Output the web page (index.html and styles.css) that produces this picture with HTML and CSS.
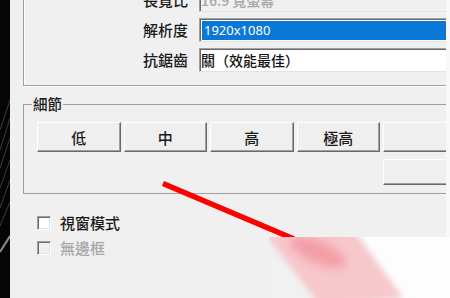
FILE: index.html
```html
<!DOCTYPE html>
<html lang="zh-Hant">
<head>
    <meta charset="UTF-8">
    <title>顯示設定</title>
    <link rel="stylesheet" href="styles.css">
</head>
<body>
<div class="screen">
    <div class="strip">
        <svg width="10" height="298" viewBox="0 0 10 298">
            <g stroke="#4a4a4a" stroke-width="1" opacity="0.8">
                <line x1="0" y1="130" x2="10" y2="100"/>
                <line x1="0" y1="150" x2="10" y2="118"/>
                <line x1="0" y1="168" x2="10" y2="138"/>
                <line x1="0" y1="188" x2="10" y2="160"/>
                <line x1="0" y1="208" x2="10" y2="180"/>
                <line x1="0" y1="226" x2="10" y2="202"/>
            </g>
            <line x1="0" y1="252" x2="10" y2="236" stroke="#8a8a8a" stroke-width="2"/>
        </svg>
    </div>

    <div class="panel">
        <!-- 顯示 -->
        <div class="settings">
            <span class="label">長寬比</span>
            <div class="field disabled">16:9 寬螢幕</div>

            <span class="label">解析度</span>
            <div class="field"><span class="selected">1920x1080</span></div>

            <span class="label">抗鋸齒</span>
            <div class="field">關（效能最佳）</div>
        </div>

        <!-- 細節 -->
        <fieldset class="detail">
            <legend>細節</legend>
            <div class="presets">
                <button class="btn">低</button>
                <button class="btn">中</button>
                <button class="btn">高</button>
                <button class="btn">極高</button>
                <button class="btn"></button>
            </div>
            <div class="extra">
                <button class="btn wide"></button>
            </div>
        </fieldset>

        <div class="options">
            <label class="check"><span class="box"></span>視窗模式</label>
            <label class="check off"><span class="box"></span>無邊框</label>
        </div>
    </div>

    <div class="edge"></div>

    <!-- 標註箭頭 -->
    <svg class="marker" width="450" height="298" viewBox="0 0 450 298">
        <defs>
            <filter id="soft" x="-50%" y="-50%" width="200%" height="200%">
                <feGaussianBlur stdDeviation="5"/>
            </filter>
            <filter id="softer" x="-50%" y="-50%" width="200%" height="200%">
                <feGaussianBlur stdDeviation="3"/>
            </filter>
            <clipPath id="patch">
                <rect x="269" y="237" width="181" height="61"/>
            </clipPath>
        </defs>
        <line x1="163" y1="183.5" x2="294" y2="239" stroke="#ff0000" stroke-width="5.5"/>
        <g clip-path="url(#patch)">
            <rect x="269" y="237" width="181" height="61" fill="#f1f1f1"/>
            <polygon points="353,230 460,230 460,305 403,305" fill="#fdfdfd" filter="url(#softer)"/>
            <polygon points="262,230 353,230 403,298 320,305" fill="#f6c7cb" filter="url(#softer)"/>
            <ellipse cx="318" cy="252" rx="30" ry="11" fill="#f39ea6" transform="rotate(24 318 252)" filter="url(#soft)"/>
        </g>
    </svg>
</div>
</body>
</html>
```

FILE: styles.css
```css
body {
    margin: 0;
    overflow: hidden;
    font-family: "Noto Sans CJK TC", "Noto Sans", sans-serif;
}

.screen {
    position: relative;
    display: flex;
    width: 450px;
    height: 298px;
    overflow: hidden;
    background: #f0f0f0;
}

.strip {
    flex: none;
    width: 10px;
    background: #050505;
}

.strip svg {
    display: block;
}

.panel {
    flex: 1;
    min-width: 0;
    overflow: hidden;
    background: #f0f0f0;
}

.edge {
    flex: none;
    width: 4px;
    background: #f8f8f8;
}

/* 上方群組（頂端被裁切） */
.settings {
    display: grid;
    grid-template-columns: 164px 1fr;
    column-gap: 11px;
    row-gap: 6px;
    margin: -21px -30px 0 13px;
    padding: 8px 0 13px 0;
    border: 1px solid #a0a0a0;
    box-shadow: inset 1px 1px 0 #fff, 1px 1px 0 #fff;
}

.label {
    text-align: right;
    font-size: 15px;
    font-weight: 500;
    line-height: 24px;
    color: #1a1a1a;
}

.field {
    box-sizing: border-box;
    height: 24px;
    padding-left: 1px;
    border: 1px solid;
    border-color: #a0a0a0 #e3e3e3 #e3e3e3 #a0a0a0;
    box-shadow: inset 1px 1px 0 #696969;
    background: #fff;
    font-size: 14px;
    font-weight: 500;
    line-height: 22px;
    color: #111;
    white-space: nowrap;
}

.field.disabled {
    background: #f0f0f0;
    color: #a6a6a6;
}

.selected {
    display: block;
    height: 19px;
    margin: 2px 0 1px 1px;
    padding-left: 2px;
    background: #0a78d7;
    color: #fff;
    font-family: "Noto Sans", sans-serif;
    font-size: 13px;
    font-weight: 400;
    line-height: 19px;
}

/* 細節 */
.detail {
    min-width: 0;
    margin: 9px -30px 0 13px;
    padding: 9px 0 8px 13px;
    border: 1px solid #a0a0a0;
}

.detail legend {
    margin-left: -5px;
    padding: 0 1px;
    font-size: 14.5px;
    font-weight: 500;
    line-height: 18px;
    color: #1a1a1a;
}

.presets {
    display: flex;
    gap: 3px;
    width: 600px;
}

.btn {
    flex: none;
    box-sizing: border-box;
    width: 83.5px;
    height: 30px;
    padding: 0;
    border: 1px solid;
    border-color: #fff #696969 #696969 #fff;
    box-shadow: inset -1px -1px 0 #a0a0a0;
    background: #efefef;
    font-family: "Noto Sans CJK TC", sans-serif;
    font-size: 15px;
    font-weight: 500;
    color: #1a1a1a;
}

.extra {
    display: flex;
    margin-top: 7px;
    padding-left: 346px;
}

.btn.wide {
    width: 100px;
    height: 26px;
}

/* 核取方塊 */
.options {
    margin: 16px 0 0 27px;
}

.check {
    display: flex;
    align-items: center;
    gap: 9px;
    height: 25px;
    font-size: 15px;
    font-weight: 500;
    color: #1a1a1a;
}

.box {
    flex: none;
    box-sizing: border-box;
    width: 14px;
    height: 14px;
    border: 1px solid;
    border-color: #a0a0a0 #fff #fff #a0a0a0;
    box-shadow: inset 1px 1px 0 #696969, inset -1px -1px 0 #e3e3e3;
    background: #fff;
}

.check.off {
    color: #a6a6a6;
}

.check.off .box {
    background: #f0f0f0;
}

.marker {
    position: absolute;
    top: 0;
    left: 0;
    pointer-events: none;
}
```
